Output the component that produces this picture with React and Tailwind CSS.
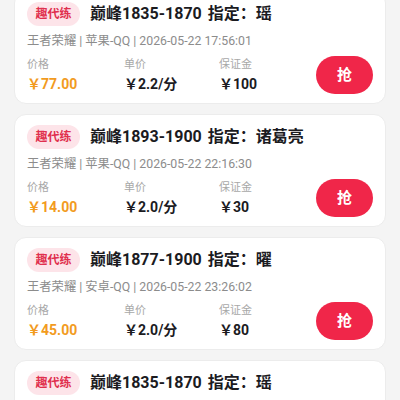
import React from "react";

const items = [
  { title: "巅峰1835-1870", who: "瑶", plat: "苹果-QQ", time: "2026-05-22 17:56:01", price: "77.00", unit: "2.2/分", dep: "100" },
  { title: "巅峰1893-1900", who: "诸葛亮", plat: "苹果-QQ", time: "2026-05-22 22:16:30", price: "14.00", unit: "2.0/分", dep: "30" },
  { title: "巅峰1877-1900", who: "曜", plat: "安卓-QQ", time: "2026-05-22 23:26:02", price: "45.00", unit: "2.0/分", dep: "80" },
  { title: "巅峰1835-1870", who: "瑶", plat: "苹果-QQ", time: "2026-05-22 17:56:01", price: "77.00", unit: "2.2/分", dep: "100" },
];

function Card({ it }) {
  return (
    <div className="bg-white rounded-[12px] border border-[#ececec] px-[12px] pt-[10px] pb-[9px]">
      <div className="flex items-center gap-[10px] h-[24px]">
        <span className="h-[24px] w-[53px] rounded-full bg-[#fde4e9] text-[#e0304e] text-[12px] font-bold flex items-center justify-center">趣代练</span>
        <span className="text-[16px] font-bold text-[#1b1b1f] leading-[24px]">
          {it.title}<span className="ml-[6px]">指定：{it.who}</span>
        </span>
      </div>
      <div className="mt-[7px] text-[12.3px] leading-[16px] text-[#8c8c8c]">
        王者荣耀 | {it.plat} | {it.time}
      </div>
      <div className="mt-[7px] flex items-center justify-between">
        <div className="flex">
          <div className="w-[97px]">
            <div className="text-[11px] leading-[16px] text-[#a8a8a8]">价格</div>
            <div className="mt-[2px] text-[14px] leading-[18px] font-bold text-[#f29b1e]">￥{it.price}</div>
          </div>
          <div className="w-[95px]">
            <div className="text-[11px] leading-[16px] text-[#a8a8a8]">单价</div>
            <div className="mt-[2px] text-[14px] leading-[18px] font-bold text-[#1b1b1f]">￥{it.unit}</div>
          </div>
          <div>
            <div className="text-[11px] leading-[16px] text-[#a8a8a8]">保证金</div>
            <div className="mt-[2px] text-[14px] leading-[18px] font-bold text-[#1b1b1f]">￥{it.dep}</div>
          </div>
        </div>
        <button className="w-[57px] h-[38px] rounded-full bg-[#f02649] text-white text-[15px] font-bold flex items-center justify-center">抢</button>
      </div>
    </div>
  );
}

export default function App() {
  return (
    <div
      className="w-[400px] h-[400px] overflow-hidden bg-[#f4f4f4]"
      style={{ fontFamily: "Roboto, 'Noto Sans CJK SC', sans-serif" }}
    >
      <div className="-mt-[9px] px-[14px] flex flex-col gap-[10px]">
        {items.map((it, i) => (
          <Card key={i} it={it} />
        ))}
      </div>
    </div>
  );
}
